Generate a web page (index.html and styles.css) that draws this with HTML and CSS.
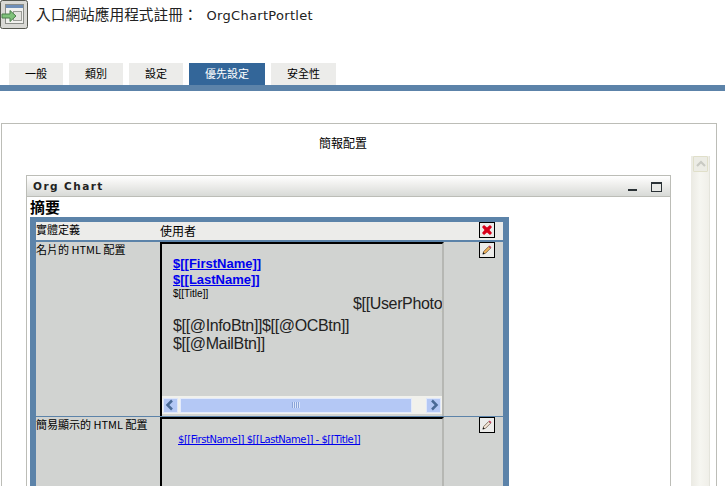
FILE: index.html
```html
<!DOCTYPE html>
<html lang="zh-Hant">
<head>
<meta charset="utf-8">
<title>OrgChartPortlet</title>
<link rel="stylesheet" href="styles.css">
</head>
<body>
<header class="page-head">
  <span class="app-icon">
    <svg width="28" height="29" viewBox="0 0 28 29">
      <rect x="0.5" y="0.5" width="27" height="28" rx="2" fill="#d9d9d5" stroke="#55574f"/>
      <rect x="5.5" y="4.5" width="18" height="19" fill="#f1f1ee" stroke="#8a8d88"/>
      <rect x="6" y="5" width="17" height="3" fill="#6f8fb8"/>
      <rect x="13.5" y="11.5" width="8" height="9" fill="#e4e4e0" stroke="#9a9c96"/>
      <path d="M2 14h8v-3.500l6 5.500-6 5.500V18H2z" fill="#7fc27a" stroke="#4a7f4a"/>
    </svg>
  </span>
  <h1 class="page-title">入口網站應用程式註冊：<span class="page-name">OrgChartPortlet</span></h1>
</header>
<nav class="tabs">
  <span class="tab tab-w1">一般</span>
  <span class="tab tab-w1">類別</span>
  <span class="tab tab-w1">設定</span>
  <span class="tab tab-active">優先設定</span>
  <span class="tab tab-w2">安全性</span>
</nav>
<section class="panel">
  <div class="panel-main">
    <div class="panel-title">簡報配置</div>
    <article class="portlet">
      <div class="portlet-bar">
        <span class="portlet-name">Org Chart</span>
        <span class="win-min"></span>
        <span class="win-max"></span>
      </div>
      <h2 class="summary">摘要</h2>
      <div class="config">
        <div class="row row-entity">
          <div class="label">實體定義</div>
          <div class="entity-value">使用者</div>
          <div class="action">
            <span class="icon-btn icon-btn-light">
              <svg width="14" height="14" viewBox="0 0 14 14"><path d="M2 4l2-2 3 2.500 3-2.500 2 2-2.500 3 2.500 3-2 2-3-2.500-3 2.500-2-2 2.500-3z" fill="#d8001a"/></svg>
            </span>
          </div>
        </div>
        <div class="row row-card">
          <div class="label">名片的 HTML 配置</div>
          <div class="preview preview-card">
            <div class="preview-body">
              <a class="card-link" href="#">$[[FirstName]]</a>
              <a class="card-link" href="#">$[[LastName]]</a>
              <div class="card-title">$[[Title]]</div>
              <div class="card-photo">$[[UserPhoto]]</div>
              <div class="card-btns">$[[@InfoBtn]]$[[@OCBtn]]<br>$[[@MailBtn]]</div>
            </div>
            <div class="hscroll">
              <span class="hs-btn"><svg width="12" height="12" viewBox="0 0 12 12"><path d="M8 1.500L3.500 6 8 10.500" fill="none" stroke="#4a6a96" stroke-width="2.500"/></svg></span>
              <span class="hs-thumb"><span class="hs-grip"></span></span>
              <span class="hs-btn"><svg width="12" height="12" viewBox="0 0 12 12"><path d="M4 1.500L8.500 6 4 10.500" fill="none" stroke="#4a6a96" stroke-width="2.500"/></svg></span>
            </div>
          </div>
          <div class="action">
            <span class="icon-btn">
              <svg width="12" height="12" viewBox="0 0 12 12"><path d="M2 10l.7-2.500 5-5 1.800 1.800-5 5z" fill="#f2b35a" stroke="#3a2a10" stroke-width="0.600"/><path d="M7.700 2.500l1-1 1.800 1.800-1 1z" fill="#c9405f"/><path d="M1.500 10.500l.8-2.200 1.400 1.400z" fill="#111"/></svg>
            </span>
          </div>
        </div>
        <div class="row row-simple">
          <div class="label">簡易顯示的 HTML 配置</div>
          <div class="preview preview-simple">
            <a class="simple-link" href="#">$[[FirstName]] $[[LastName]] - $[[Title]]</a>
          </div>
          <div class="action">
            <span class="icon-btn">
              <svg width="12" height="12" viewBox="0 0 12 12"><path d="M2 10l.7-2.500 5-5 1.800 1.800-5 5z" fill="#f6e6d8" stroke="#3a2a10" stroke-width="0.600"/><path d="M7.700 2.500l1-1 1.800 1.800-1 1z" fill="#c9405f"/><path d="M1.500 10.500l.8-2.200 1.400 1.400z" fill="#111"/></svg>
            </span>
          </div>
        </div>
      </div>
    </article>
  </div>
  <aside class="vscroll">
    <span class="vs-btn"><svg width="12" height="10" viewBox="0 0 12 10"><path d="M2 7l4-4 4 4" fill="none" stroke="#c9cac3" stroke-width="2.200"/></svg></span>
  </aside>
</section>
</body>
</html>
```
FILE: styles.css
```css
* { box-sizing: border-box; }
html, body { margin: 0; height: 486px; overflow: hidden; background: #fff; }
body { font-family: "Liberation Sans", "Noto Sans CJK TC", sans-serif; font-size: 11px; color: #000; }

.page-head { display: flex; align-items: flex-start; height: 63px; }
.app-icon { display: block; width: 28px; height: 29px; }
.app-icon svg { display: block; }
.page-title { margin: 5px 0 0 8px; font: 400 14.700px/20px "DejaVu Sans", "Noto Sans CJK TC", sans-serif; white-space: pre; color: #222; }
.page-name { font-family: "DejaVu Sans", sans-serif; font-size: 13px; letter-spacing: 0.300px; margin-left: 9px; }

.tabs { display: flex; gap: 6px; height: 28px; padding-left: 9px; border-bottom: 6px solid #5c83a9; }
.tab { display: flex; align-items: center; justify-content: center; height: 22px; padding-bottom: 2px; background: #ececea; font: 11px "Noto Sans CJK TC", sans-serif; color: #000; }
.tab-w1 { width: 54px; }
.tab-w2 { width: 65px; }
.tab-active { width: 76px; background: #336699; color: #fff; }

.panel { display: flex; margin: 32px 8px 0 1px; width: 716px; height: 400px; border: 1px solid #bcbdb7; border-bottom: 0; }
.panel-main { width: 682px; flex: none; }
.panel-title { height: 51px; padding-top: 10px; text-align: center; font: 12px/18px "Noto Sans CJK TC", sans-serif; color: #000; }
.portlet { margin-left: 24px; width: 645px; height: 400px; border: 1px solid #bcbdb7; border-bottom: 0; }
.portlet-bar { display: flex; align-items: center; height: 21px; padding: 0 8px 0 6px; background: linear-gradient(#fff, #f0f0ee 40%, #d8dad7); border-bottom: 1px solid #bcbdb7; }
.portlet-name { flex: 1; font: 700 10.500px/14px "DejaVu Sans", sans-serif; letter-spacing: 1.450px; color: #222; }
.win-min { width: 9px; height: 2px; margin: 8px 14px 0 0; background: #2b3236; }
.win-max { width: 11px; height: 10px; margin-top: 2px; border: 1px solid #2b3236; border-top-width: 2px; background: #e8e9e6; }
.summary { margin: 0; padding-left: 3px; height: 20px; font: 700 15px/20px "Noto Sans CJK TC", sans-serif; color: #000; }

.config { width: 479px; margin-left: 3px; padding: 5px 6px 0; background: #5c83a9; height: 280px; }
.row { display: grid; grid-template-columns: 124px 284px 59px; }
.label { font: 11px/14px "Noto Sans CJK TC", sans-serif; color: #000; white-space: nowrap; }
.action { display: flex; justify-content: flex-end; padding-right: 8px; }
.icon-btn { display: flex; align-items: center; justify-content: center; width: 16px; height: 16px; border: 1px solid #000; background: #ececea; }

.row-entity { height: 18px; background: #ececea; margin-bottom: 2px; }
.entity-value { font: 12px/18px "Noto Sans CJK TC", sans-serif; color: #000; }
.row-card { height: 174px; background: #d1d3d1; }
.row-simple { height: 70px; background: #d1d3d1; border-top: 1px solid #5c83a9; }

.preview { border-left: 2px solid #000; border-top: 2px solid #000; border-right: 2px solid #b6b7b3; overflow: hidden; }
.preview-card { display: flex; flex-direction: column; }
.preview-body { flex: 1; min-height: 0; overflow: hidden; padding: 12px 0 0 11px; }
.card-link { display: block; font: 700 13px/16px "Liberation Sans", sans-serif; color: #0000ee; text-decoration: underline; }
.card-title { font: 10px/12px "Liberation Sans", sans-serif; }
.card-photo { font: 16px/18px "Liberation Sans", sans-serif; letter-spacing: -0.350px; padding-left: 180px; margin-top: -5px; white-space: nowrap; color: #222; }
.card-btns { font: 16px/18px "Liberation Sans", sans-serif; letter-spacing: -0.350px; margin-top: 4px; white-space: nowrap; color: #222; }

.hscroll { display: flex; align-items: center; height: 18px; margin-bottom: 2px; background: #f1f1ec; padding: 0 1px; }
.hs-btn { display: flex; align-items: center; justify-content: center; width: 15px; height: 15px; background: #b4c8f5; border: 1px solid #dfe7fa; }
.hs-thumb { display: flex; align-items: center; justify-content: center; width: 233px; height: 15px; margin: 0 14px 0 2px; background: #b4c8f5; border: 1px solid #e3eafb; }
.hs-grip { width: 8px; height: 6px; background: repeating-linear-gradient(90deg, #8aa4d8 0 1px, #dbe5fb 1px 2px); }

.preview-simple { padding: 14px 0 0 16px; }
.simple-link { font: 10px/13px "DejaVu Sans", sans-serif; letter-spacing: -0.470px; color: #0000ee; text-decoration: underline; white-space: nowrap; }

.vscroll { width: 19px; height: 400px; margin: 32px 0 0 7px; background: linear-gradient(90deg, #ebeae3, #f6f6f1 50%, #f0efe9); padding-left: 2px; border-right: 1px solid #e4e4dc; }
.vs-btn { display: flex; align-items: center; justify-content: center; width: 15px; height: 16px; background: #ecece5; border: 1px solid #e0dfc9; border-radius: 1px; }
```
